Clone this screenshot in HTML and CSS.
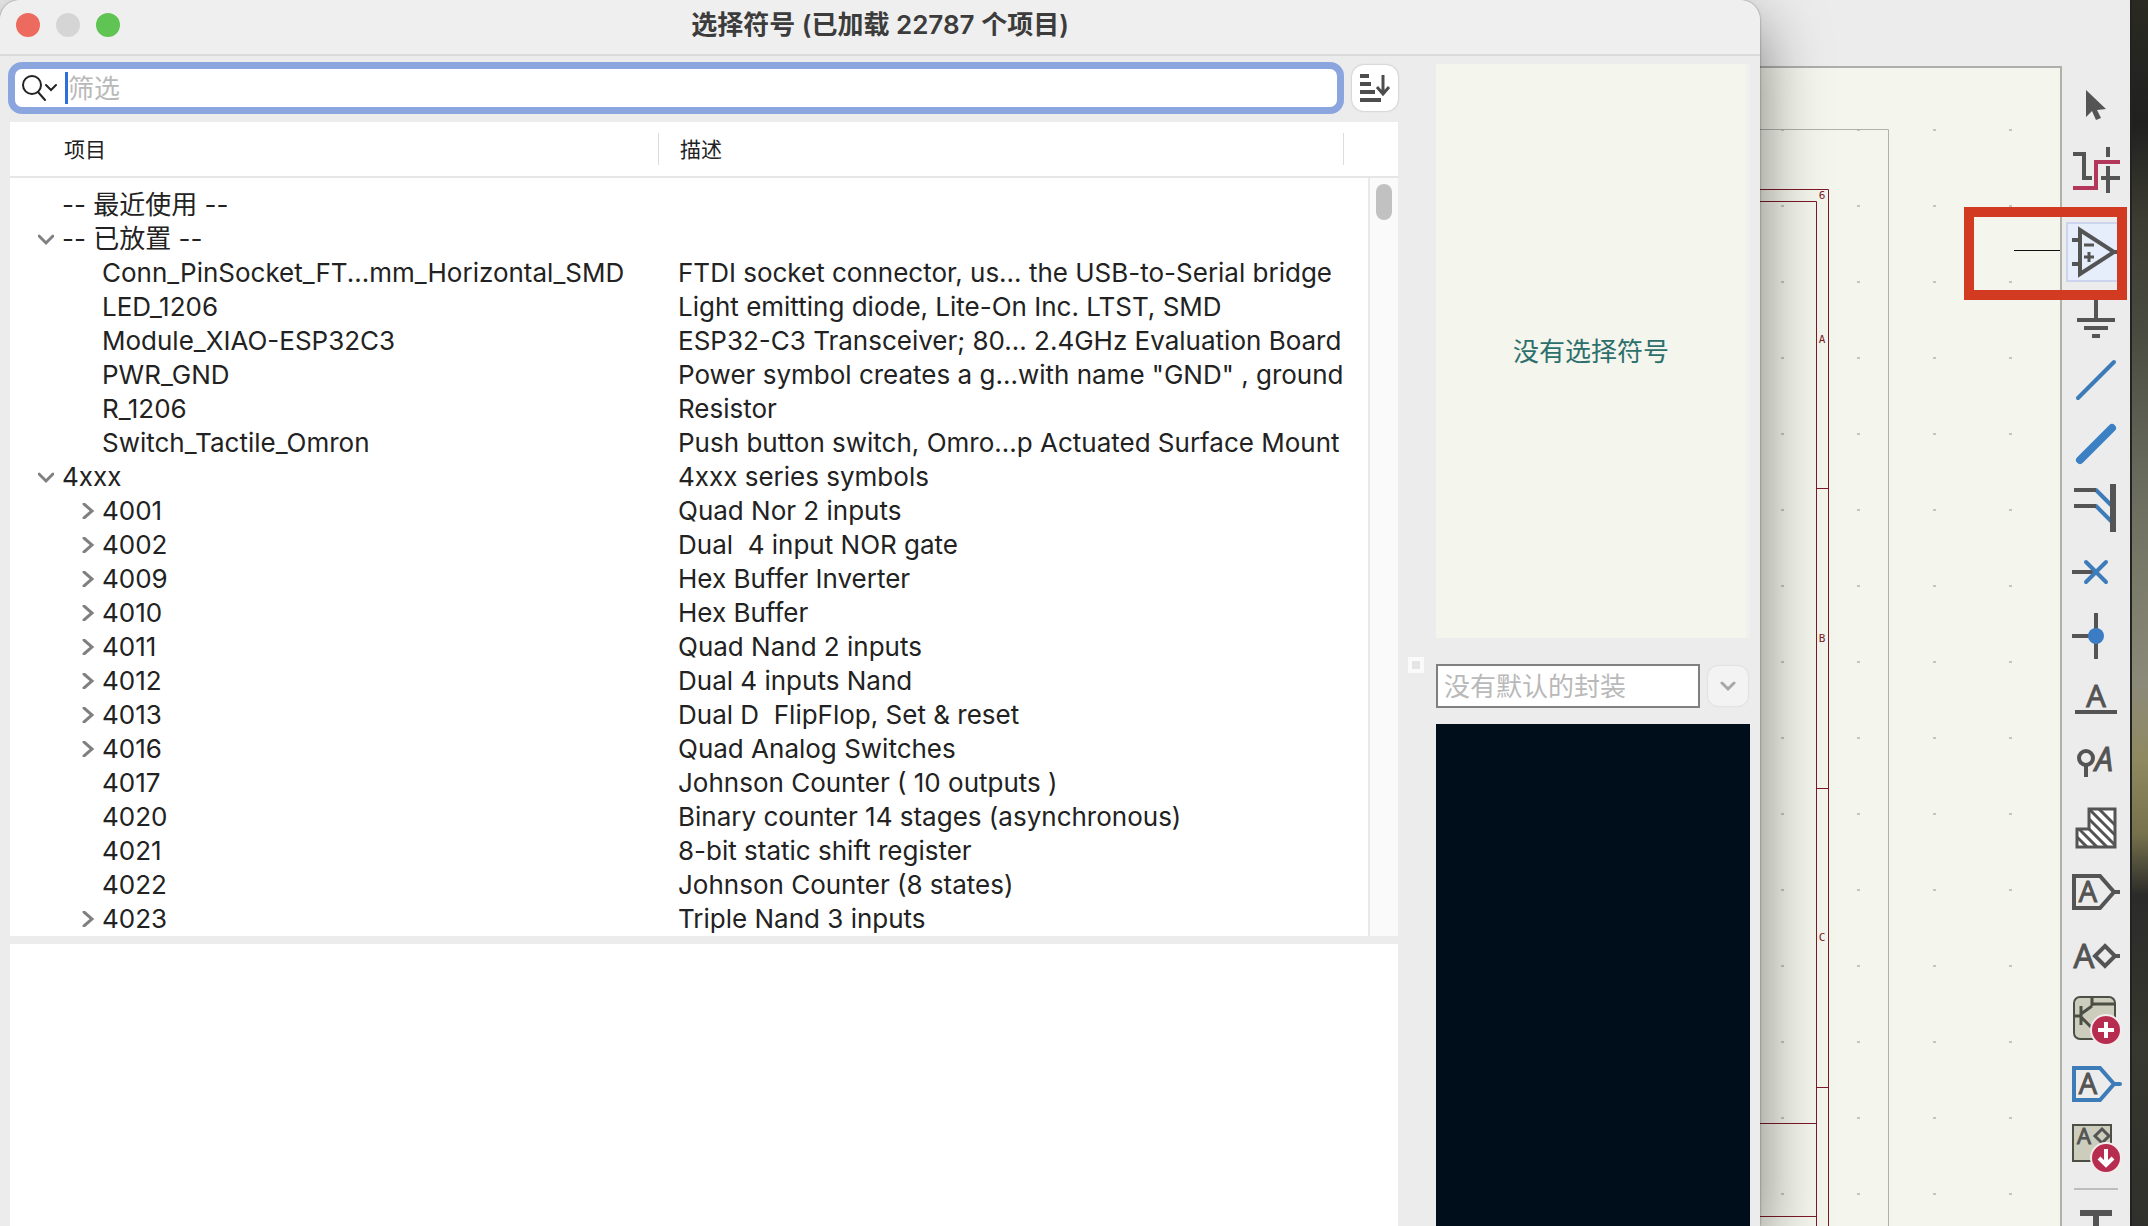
FILE: index.html
```html
<!DOCTYPE html>
<html lang="zh-CN">
<head>
  <meta charset="UTF-8" />
  <meta name="viewport" content="width=device-width, initial-scale=1.0"/>
  <title>选择符号</title>
  <link rel="stylesheet" href="styles.css">
</head>
<body>
  <div class="desktop">
    <main class="dialog">
      <header class="titlebar">
        <div class="lights">
          <button class="light close" aria-label="关闭"></button>
          <button class="light minimize" aria-label="最小化"></button>
          <button class="light zoom" aria-label="缩放"></button>
        </div>
        <h1>选择符号 (已加载 22787 个项目)</h1>
      </header>

      <div class="dialog-body">
        <section class="left">
          <div class="search-row">
            <label class="search">
              <svg width="36" height="28" viewBox="0 0 36 28" fill="none" stroke="#222" stroke-width="2" stroke-linecap="round">
                <circle cx="11" cy="11" r="9"/>
                <path d="M17 18l7 8M25 11l5 5 5-5"/>
              </svg>
              <span class="caret"></span>
              <input type="text" placeholder="筛选" aria-label="筛选">
            </label>
            <button class="sort" aria-label="排序">
              <svg width="32" height="32" viewBox="0 0 32 32" fill="none" stroke="#4d4d4d" stroke-width="4">
                <path d="M1 4h9M1 12h11M1 20h15M1 28h21"/>
                <path d="M24 3v18M18 15l6 7 6-7" stroke-width="3"/>
              </svg>
            </button>
          </div>

          <div class="list">
            <table class="tree">
              <thead>
                <tr><th class="col-item">项目</th><th class="col-desc">描述</th><th class="col-end"></th></tr>
              </thead>
              <tbody id="rows"></tbody>
            </table>
            <div class="scrollbar"><div class="thumb"></div></div>
          </div>
          <div class="details"></div>
        </section>

        <div class="sash"><span></span></div>

        <section class="right">
          <div class="symbol-preview">没有选择符号</div>
          <div class="footprint-row">
            <input type="text" placeholder="没有默认的封装" aria-label="封装">
            <button class="drop" aria-label="选择封装">
              <svg width="16" height="12" viewBox="0 0 16 12" fill="none" stroke="#a8a8a8" stroke-width="3" stroke-linecap="round"><path d="M2 3l6 6 6-6"/></svg>
            </button>
          </div>
          <div class="footprint-preview"></div>
        </section>
      </div>
    </main>

    <section class="editor">
      <div class="canvas">
        <svg width="300" height="1158" viewBox="0 0 300 1158" fill="none">
          <defs>
            <pattern id="grid" x="20" y="60" width="76" height="76" patternUnits="userSpaceOnUse">
              <rect x="1" y="1" width="3" height="2" fill="#c4c5bc"/>
            </pattern>
          </defs>
          <rect width="300" height="1158" fill="url(#grid)"/>
          <path d="M0 61.500H128.500V1158" stroke="#b0b1aa"/>
          <g stroke="#7c1a26">
            <path d="M0 121.500H68.500V1158M0 133.500H56.500V1158"/>
            <path d="M56 420.500h12M56 720.500h12M56 1019.500h12M0 1055.500h56M0 1148.500h56"/>
          </g>
          <g class="zone">
            <text x="62" y="131">6</text>
            <text x="62" y="275">A</text>
            <text x="62" y="574">B</text>
            <text x="62" y="873">C</text>
          </g>
          <path d="M254 182.500h46" stroke="#111"/>
        </svg>
      </div>

      <nav class="toolbar">
        <button aria-label="选择"><svg class="icon" viewBox="0 0 48 48"><path class="solid" d="M14 8v27l6-6 4 9 5-2-4-8 9-1z"/></svg></button>
        <button aria-label="高亮网络"><svg class="icon" viewBox="0 0 48 48"><path d="M1 8h11v24h8M36 1v10M36 20v27M29 32h19"/><path class="red" d="M1 42h23V16h24"/></svg></button>
        <hr>
        <button class="active" aria-label="放置符号"><svg class="icon" viewBox="0 0 48 48"><path d="M8 2v44l34-22zM42 24h6M0 12h8M0 36h8"/><path class="mid" d="M12 17h10M12 29h10M17 24v10"/></svg></button>
        <button aria-label="放置电源"><svg class="icon" viewBox="0 0 48 48"><path d="M24 1v27M5 28h38M12 36h24M20 44h8"/></svg></button>
        <button aria-label="导线"><svg class="icon" viewBox="0 0 48 48"><path class="blue" d="M6 42L42 6"/></svg></button>
        <button aria-label="总线"><svg class="icon" viewBox="0 0 48 48"><path class="blue thick" d="M8 40L40 8"/></svg></button>
        <button aria-label="总线入口"><svg class="icon" viewBox="0 0 48 48"><path class="blue" d="M24 6l16 16M24 22l16 16"/><path d="M2 6h22M2 22h22"/><path class="bar" d="M41 0v48"/></svg></button>
        <button aria-label="未连接"><svg class="icon" viewBox="0 0 48 48"><path d="M0 24h22"/><path class="blue" d="M14 14l20 20M34 14L14 34"/></svg></button>
        <button aria-label="节点"><svg class="icon" viewBox="0 0 48 48"><path d="M0 24h18M24 1v46"/><circle class="dot" cx="24" cy="24" r="8"/></svg></button>
        <button aria-label="标签"><svg class="icon" viewBox="0 0 48 48"><text x="24" y="31" font-size="31">A</text><path d="M3 36h42"/></svg></button>
        <button aria-label="网络类"><svg class="icon" viewBox="0 0 48 48"><circle cx="14" cy="18" r="7"/><path d="M14 26v11"/><text x="32" y="31" font-size="32" font-style="italic">A</text></svg></button>
        <button aria-label="规则区域"><svg class="icon" viewBox="0 0 48 48"><clipPath id="area"><path d="M5 25h12V5h26v38H5z"/></clipPath><path class="white" d="M5 25h12V5h26v38H5z"/><path clip-path="url(#area)" class="mid" d="M16 -6l36 36M16 4l36 36M16 14l36 36M10 18l36 36M0 18l36 36M0 28l24 24M0 38l12 12"/><path class="mid" d="M5 25h12V5h26v38H5z"/></svg></button>
        <button aria-label="全局标签"><svg class="icon" viewBox="0 0 48 48"><path d="M2 8h26l14 16-14 16H2zM42 24h6"/><text x="16" y="34" font-size="29">A</text></svg></button>
        <button aria-label="层次标签"><svg class="icon" viewBox="0 0 48 48"><text x="12" y="36" font-size="33">A</text><path d="M33 14l10 10-10 10-10-10zM43 24h5"/></svg></button>
        <button aria-label="层次图框"><svg class="icon" viewBox="0 0 48 48"><rect class="sheet" x="2" y="1" width="41" height="42" rx="6"/><path class="olive" d="M20 2v8M20 8h23M2 20h7M9 10v19M9 18l11-8M9 21l11 11"/><circle class="badge" cx="34" cy="34" r="15"/><path class="sign" d="M34 26v16M26 34h16"/></svg></button>
        <button aria-label="图框引脚"><svg class="icon" viewBox="0 0 48 48"><path class="blue" d="M2 8h26l14 16-14 16H2zM42 24h6"/><text x="16" y="34" font-size="29">A</text></svg></button>
        <button aria-label="同步引脚"><svg class="icon" viewBox="0 0 48 48"><rect class="sheet" x="1" y="1" width="38" height="36"/><text x="12" y="20" font-size="22">A</text><path class="mid" d="M30 5l7 7-7 7-7-7z"/><circle class="badge" cx="34" cy="34" r="15"/><path class="sign" d="M34 25v15M27 34l7 7 7-7"/></svg></button>
        <hr>
        <button aria-label="文本"><svg class="icon" viewBox="0 0 48 48"><path class="bar" d="M8 7h32M24 7v40"/></svg></button>
      </nav>

      <div class="callout"></div>
    </section>

    <div class="wallpaper"></div>
  </div>

  <script>
    // [level, state, name, description]
    const rows = [
      [0, "", "-- 最近使用 --", ""],
      [0, "open", "-- 已放置 --", ""],
      [1, "", "Conn_PinSocket_FT...mm_Horizontal_SMD", "FTDI socket connector, us... the USB-to-Serial bridge"],
      [1, "", "LED_1206", "Light emitting diode, Lite-On Inc. LTST, SMD"],
      [1, "", "Module_XIAO-ESP32C3", "ESP32-C3 Transceiver; 80... 2.4GHz Evaluation Board"],
      [1, "", "PWR_GND", "Power symbol creates a g...with name \"GND\" , ground"],
      [1, "", "R_1206", "Resistor"],
      [1, "", "Switch_Tactile_Omron", "Push button switch, Omro...p Actuated Surface Mount"],
      [0, "open", "4xxx", "4xxx series symbols"],
      [1, "closed", "4001", "Quad Nor 2 inputs"],
      [1, "closed", "4002", "Dual  4 input NOR gate"],
      [1, "closed", "4009", "Hex Buffer Inverter"],
      [1, "closed", "4010", "Hex Buffer"],
      [1, "closed", "4011", "Quad Nand 2 inputs"],
      [1, "closed", "4012", "Dual 4 inputs Nand"],
      [1, "closed", "4013", "Dual D  FlipFlop, Set & reset"],
      [1, "closed", "4016", "Quad Analog Switches"],
      [1, "", "4017", "Johnson Counter ( 10 outputs )"],
      [1, "", "4020", "Binary counter 14 stages (asynchronous)"],
      [1, "", "4021", "8-bit static shift register"],
      [1, "", "4022", "Johnson Counter (8 states)"],
      [1, "closed", "4023", "Triple Nand 3 inputs"]
    ];
    const arrows = {
      open: '<svg class="arrow" viewBox="0 0 16 16"><path d="M1 5l7 7 7-7"/></svg>',
      closed: '<svg class="arrow" viewBox="0 0 16 16"><path d="M4 1l8 7-8 7"/></svg>'
    };

    const body = document.getElementById("rows");
    rows.forEach(([level, state, name, desc]) => {
      const tr = document.createElement("tr");
      tr.innerHTML = `<td><div class="node level-${level}"><span class="twisty">${arrows[state] || ""}</span><span class="name"></span></div></td><td class="desc" colspan="2"></td>`;
      tr.querySelector(".name").textContent = name;
      tr.querySelector(".desc").textContent = desc;
      body.appendChild(tr);
    });
  </script>
</body>
</html>
```
FILE: styles.css
```css
* {
  box-sizing: border-box;
}
body {
  margin: 0;
  font-family: Inter, "Noto Sans CJK SC", sans-serif;
  font-size: 26px;
  color: #222;
  background: #ececec;
}
button, input {
  font: inherit;
  margin: 0;
  padding: 0;
  border: none;
  outline: none;
}
svg {
  display: block;
}
.desktop {
  display: flex;
  height: 100vh;
  overflow: hidden;
}

/* symbol chooser */
.dialog {
  flex: 1;
  min-width: 0;
  display: flex;
  flex-direction: column;
  position: relative;
  z-index: 1;
  background: #ececec;
  border-radius: 20px 20px 0 0;
  box-shadow: 0 24px 64px rgba(0,0,0,0.5), 0 0 2px rgba(0,0,0,0.5);
}
.titlebar {
  display: grid;
  grid-template-columns: 1fr auto 1fr;
  align-items: center;
  height: 56px;
  padding: 0 16px 4px;
  background: #efefef;
  border-bottom: 2px solid #dadada;
  border-radius: 20px 20px 0 0;
}
.titlebar h1 {
  margin: 0;
  font-size: 26px;
  line-height: 32px;
  font-weight: 600;
  color: #3c3c3c;
}
.lights {
  display: flex;
  gap: 16px;
}
.light {
  width: 24px;
  height: 24px;
  border-radius: 50%;
}
.close { background: #ed6a5f; }
.minimize { background: #d5d5d5; }
.zoom { background: #5fc453; }

.dialog-body {
  flex: 1;
  min-height: 0;
  display: flex;
  padding: 6px 10px 0 8px;
}
.left {
  flex: 1;
  min-width: 0;
  display: flex;
  flex-direction: column;
}
.search-row {
  display: flex;
  align-items: center;
  gap: 8px;
  height: 52px;
}
.search {
  flex: 1;
  display: flex;
  align-items: center;
  height: 52px;
  padding-left: 6px;
  background: #fff;
  border: 7px solid #8ba5df;
  border-radius: 14px;
}
.search input {
  flex: 1;
  background: none;
}
.search .caret {
  width: 3px;
  height: 32px;
  margin-left: 8px;
  background: #2f6fdb;
}
input::placeholder {
  color: #b9b9b9;
  opacity: 1;
}
.sort {
  display: flex;
  align-items: center;
  justify-content: center;
  width: 46px;
  height: 46px;
  background: #fff;
  border-radius: 12px;
  box-shadow: 0 0 2px rgba(0,0,0,0.3);
}
.list {
  position: relative;
  margin: 8px 0 8px 2px;
  background: #fff;
}
.tree {
  width: 100%;
  table-layout: fixed;
  border-collapse: separate;
  border-spacing: 0;
}
.tree th {
  height: 56px;
  padding: 2px 0 0 54px;
  text-align: left;
  font-size: 21px;
  line-height: 30px;
  font-weight: 400;
  border-bottom: 2px solid #e6e6e6;
  background: linear-gradient(#dcdcdc, #dcdcdc) right center / 1px 32px no-repeat;
}
.tree .col-item { width: 649px; }
.tree .col-desc { padding-left: 21px; }
.tree .col-end {
  width: 50px;
  background: none;
}
.tree tbody::before {
  content: "";
  display: block;
  height: 10px;
}
.tree td {
  height: 34px;
  padding: 0;
  line-height: 34px;
  white-space: pre;
}
.tree td.desc {
  padding-left: 19px;
}
.node {
  display: flex;
  align-items: center;
  height: 34px;
}
.level-0 { padding-left: 28px; }
.level-1 { padding-left: 68px; }
.twisty {
  width: 24px;
}
.arrow {
  width: 16px;
  height: 16px;
  fill: none;
  stroke: #808080;
  stroke-width: 3;
  stroke-linecap: round;
}
.level-1 .arrow {
  margin-left: 2px;
}
.scrollbar {
  position: absolute;
  top: 56px;
  right: 0;
  bottom: 0;
  width: 30px;
  padding: 6px;
  background: #fafafa;
  border-left: 2px solid #e9e9e9;
}
.thumb {
  width: 16px;
  height: 36px;
  border-radius: 8px;
  background: #c1c1c1;
}
.details {
  flex: 1;
  margin-left: 2px;
  background: #fff;
}

.sash {
  width: 38px;
  display: flex;
  align-items: center;
  padding-left: 10px;
}
.sash span {
  width: 16px;
  height: 16px;
  margin-top: 42px;
  background: #e4e4e4;
  border: 4px solid #fafafa;
}

.right {
  width: 314px;
  display: flex;
  flex-direction: column;
  padding-top: 2px;
}
.symbol-preview {
  display: flex;
  align-items: center;
  justify-content: center;
  height: 574px;
  padding-bottom: 4px;
  background: #f4f5ec;
  border-right: 4px solid #f0f0ef;
  color: #2d6f6d;
}
.footprint-row {
  display: flex;
  align-items: center;
  gap: 8px;
  padding: 26px 2px 16px 0;
}
.footprint-row input {
  flex: 1;
  min-width: 0;
  height: 44px;
  padding-left: 6px;
  background: #fff;
  border: 2px solid #808080;
}
.drop {
  display: flex;
  align-items: center;
  justify-content: center;
  width: 40px;
  height: 40px;
  background: #f3f3f3;
  border-radius: 10px;
  box-shadow: 0 0 2px rgba(0,0,0,0.15);
}
.footprint-preview {
  flex: 1;
  background: #000d1b;
}

/* schematic editor behind the dialog */
.editor {
  position: relative;
  display: flex;
}
.canvas {
  width: 302px;
  margin-top: 66px;
  background: #f4f5ec;
  border-top: 2px solid #aeaeaa;
  border-right: 2px solid #b1b1a8;
  overflow: hidden;
}
.zone text {
  font-family: "DejaVu Sans Mono", monospace;
  font-size: 11px;
  text-anchor: middle;
  fill: #7c1a26;
}
.toolbar {
  width: 68px;
  display: flex;
  flex-direction: column;
  align-items: center;
  gap: 4px;
  padding-top: 76px;
  overflow: hidden;
}
.toolbar button {
  flex: none;
  display: flex;
  align-items: center;
  justify-content: center;
  width: 60px;
  height: 60px;
  background: none;
  border: 2px solid transparent;
}
.toolbar .active {
  background: #e6edfb;
  border-color: #cdd5ee;
}
.toolbar hr {
  flex: none;
  width: 44px;
  height: 2px;
  margin: 6px 0;
  border: none;
  background: #bdbdbd;
}
.icon {
  flex: none;
  width: 48px;
  height: 48px;
  overflow: visible;
  fill: none;
  stroke: #545454;
  stroke-width: 4;
}
.icon text {
  font-family: "Open Sans", sans-serif;
  text-anchor: middle;
  fill: #545454;
  stroke: #545454;
  stroke-width: 1;
}
.icon .solid { fill: #545454; stroke: none; }
.icon .red { stroke: #b2375a; }
.icon .blue { stroke: #3d7cb8; stroke-linecap: round; }
.icon .thick { stroke: #3b80c2; stroke-width: 8; }
.icon .bar { stroke-width: 6; }
.icon .mid { stroke-width: 3; }
.icon .dot { fill: #3b7cc4; stroke: none; }
.icon .white { fill: #fff; stroke: none; }
.icon .sheet { fill: #cdcdbd; stroke: #4c4f45; stroke-width: 2; }
.icon .olive { stroke: #4c4f45; stroke-width: 3; }
.icon .badge { fill: #b72d50; stroke: #f4ecec; stroke-width: 2; }
.icon .sign { stroke: #fff; }

.callout {
  position: absolute;
  left: 204px;
  top: 207px;
  width: 163px;
  height: 93px;
  border: 10px solid #d23a22;
}
.wallpaper {
  width: 18px;
  border-left: 2px solid #22231f;
  background: linear-gradient(#2a2a22 0, #20211f 10%, #3c3c32 18%, #4a4b40 27%, #66685a 38%, #7c7c6a 48%, #8c8a78 56%, #8f8960 62%, #77724c 68%, #2b2b29 73%, #37382f 85%, #30302c 100%);
}
```
